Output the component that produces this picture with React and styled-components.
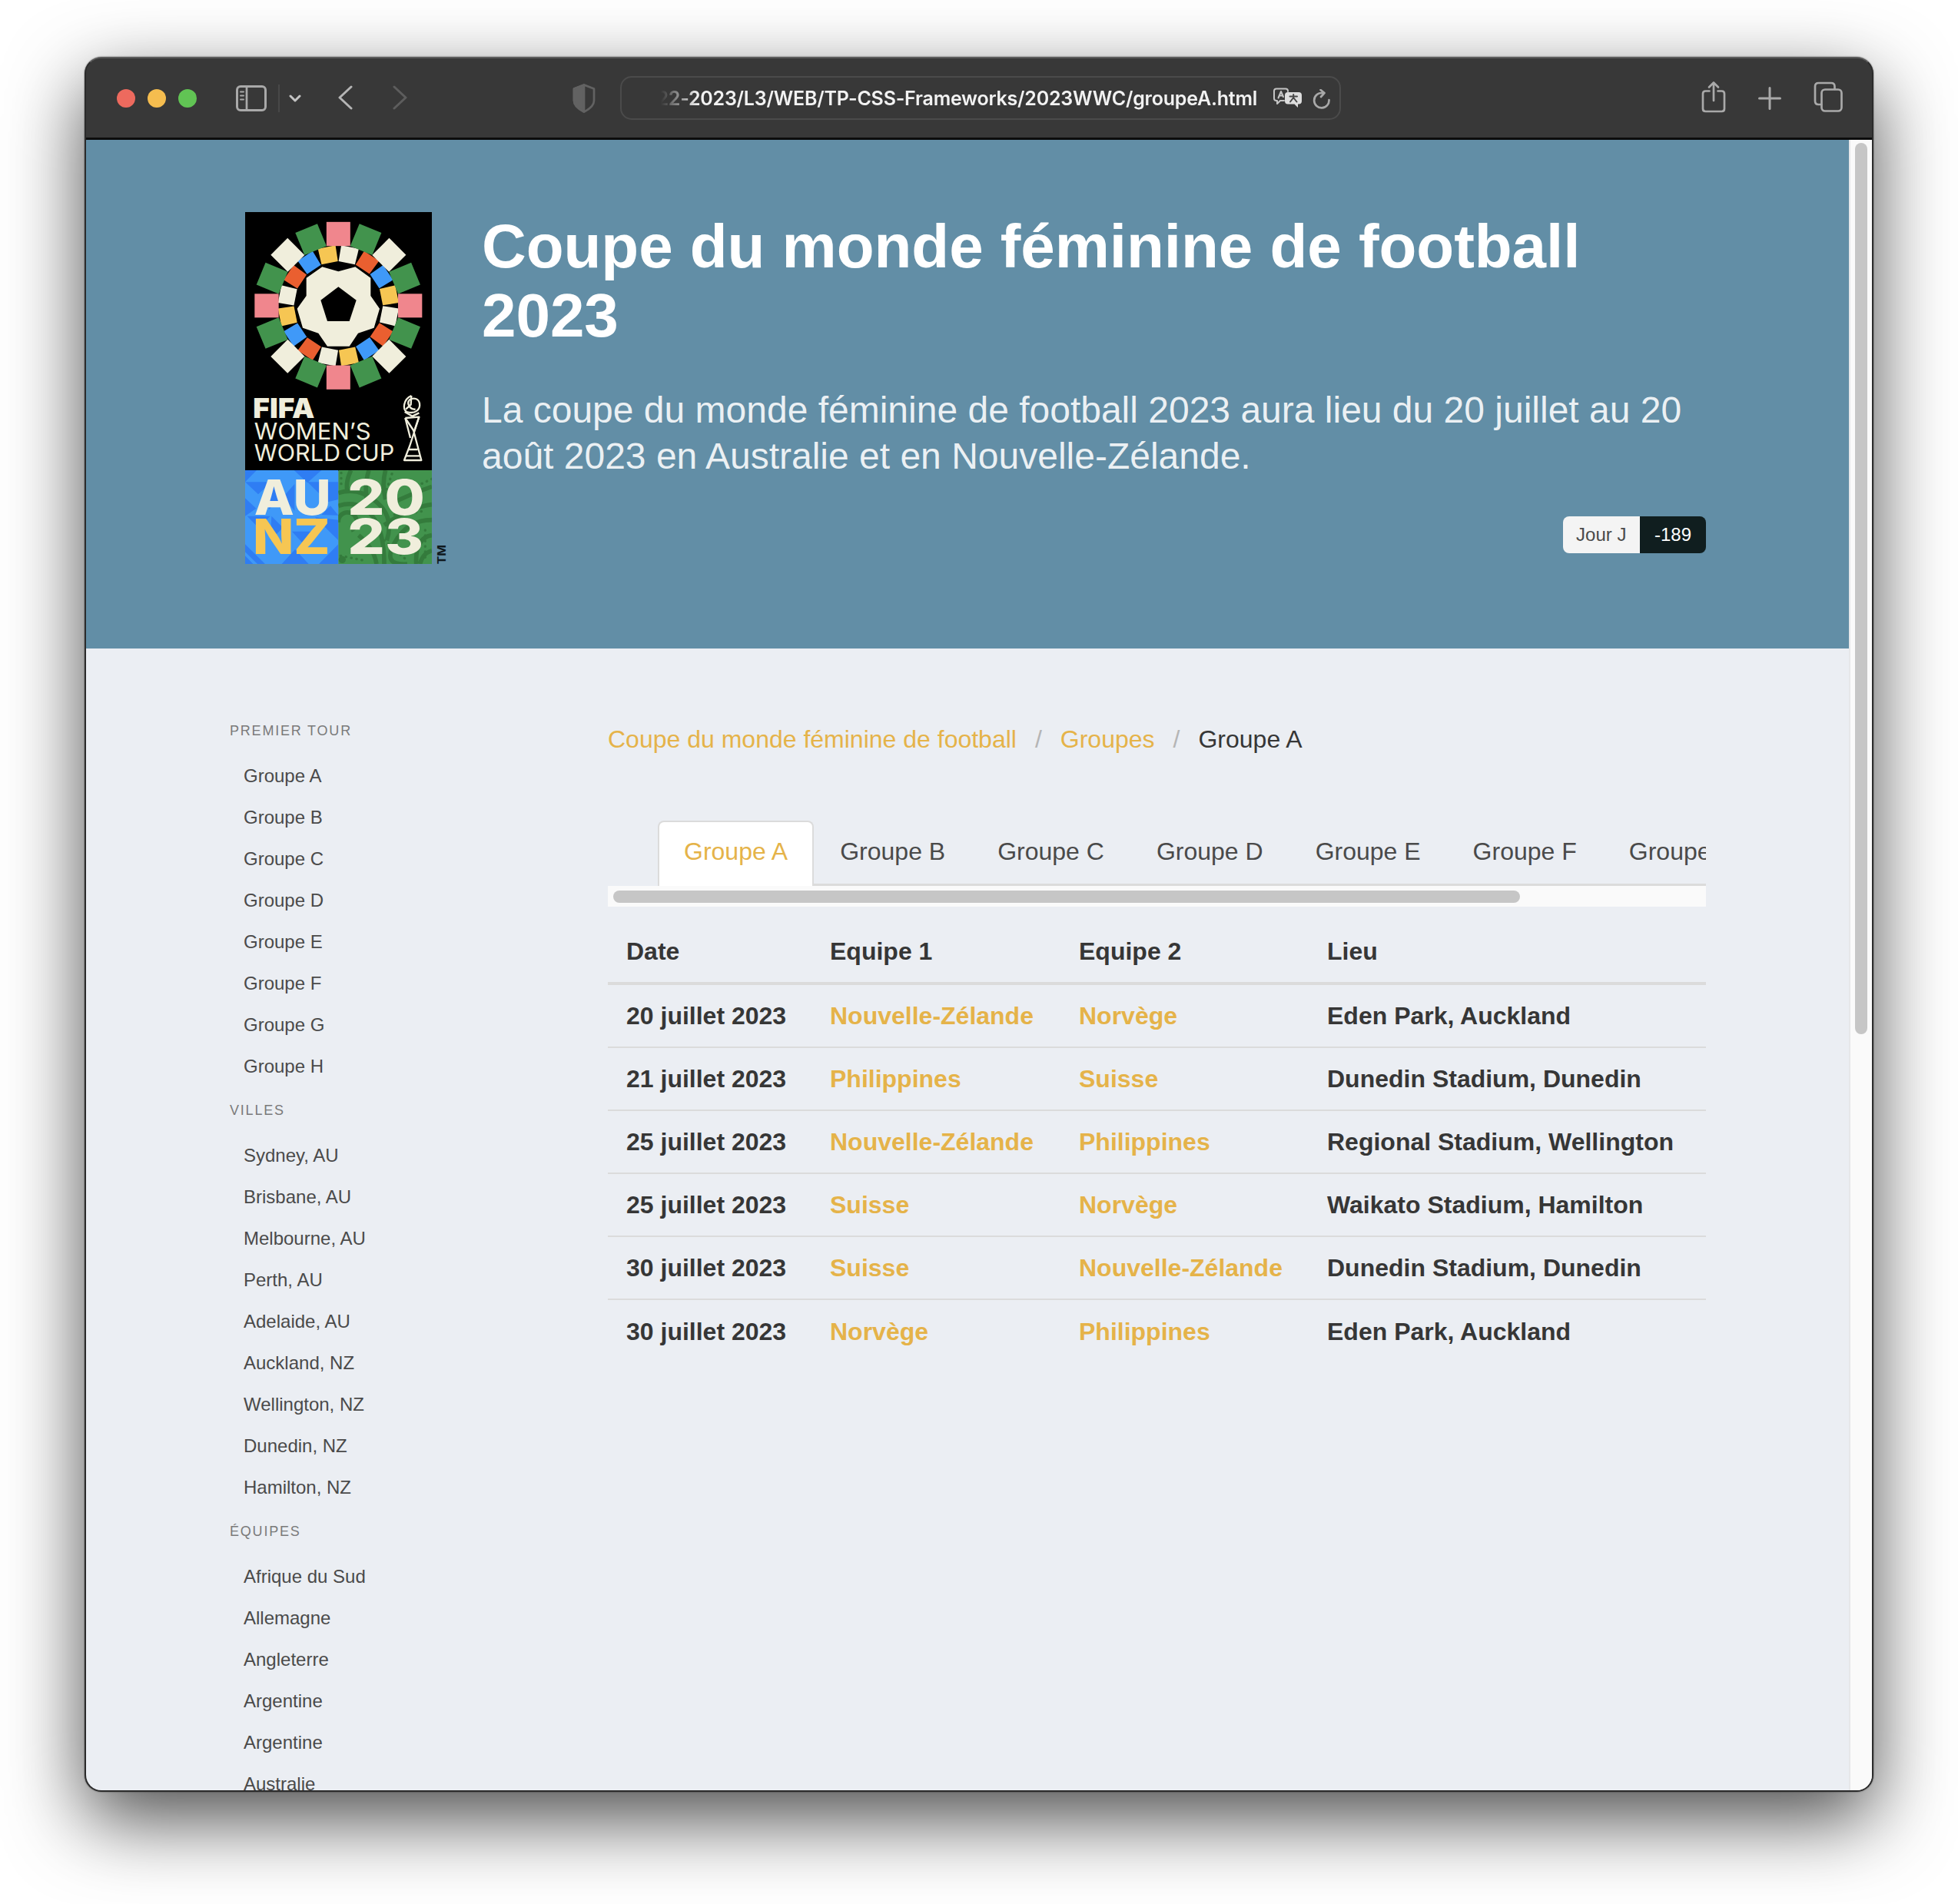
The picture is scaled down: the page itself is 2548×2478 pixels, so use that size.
import React from 'react';
import styled, { createGlobalStyle } from 'styled-components';

const GlobalStyle = createGlobalStyle`
  *, *::before, *::after { box-sizing: border-box; }
  html, body { margin: 0; padding: 0; background: #fff; }
  body { font-family: "Liberation Sans", Arial, sans-serif; color: #4a4a4a; overflow: hidden; }
  ul, h1, h2, p { margin: 0; padding: 0; list-style: none; font-weight: inherit; }
  a { color: inherit; text-decoration: none; }
`;

const Desktop = styled.div`
  width: 2548px;
  height: 2478px;
  padding: 74px 110px 0;
  overflow: hidden;
`;

const Window = styled.div`
  display: flex;
  flex-direction: column;
  width: 2328px;
  height: 2258px;
  border: 2px solid #2b2b2b;
  border-top-color: #5a5a5a;
  border-radius: 22px;
  background: #383838;
  overflow: hidden;
  box-shadow: 0 0 2px rgba(0, 0, 0, 0.6), 0 36px 100px rgba(0, 0, 0, 0.7);
`;

const Toolbar = styled.div`
  display: flex;
  align-items: center;
  flex: none;
  height: 106px;
  padding: 0 38px 0 40px;
  background: #383838;
  border-bottom: 3px solid #0c0c0c;
`;

const Lights = styled.div`
  display: flex;
  gap: 16px;
`;

const Light = styled.span`
  width: 24px;
  height: 24px;
  border-radius: 50%;
  background: ${(p) => p.$color};
`;

const Glyph = styled.svg`
  display: block;
  flex: none;
  width: ${(p) => p.$w}px;
  height: ${(p) => p.$h}px;
  margin-left: ${(p) => p.$gap || 0}px;
  margin-top: ${(p) => p.$drop || 0}px;
  fill: none;
  stroke: ${(p) => p.$color || '#a9a9a9'};
  stroke-width: 2.7;
  stroke-linecap: round;
  stroke-linejoin: round;
`;

const Divider = styled.span`
  width: 2px;
  height: 36px;
  margin-left: 15px;
  background: #484848;
`;

const AddressBar = styled.div`
  display: flex;
  align-items: center;
  width: 938px;
  height: 57px;
  margin-left: 32px;
  padding: 0 10px 0 51px;
  border: 2px solid #4b4b4b;
  border-radius: 15px;
`;

const Url = styled.div`
  display: flex;
  justify-content: flex-end;
  width: 776px;
  overflow: hidden;
  white-space: nowrap;
  font: 600 25px/40px Inter, sans-serif;
  color: #f2f2f2;
  letter-spacing: -0.22px;
  mask-image: linear-gradient(to right, transparent 0, #000 48px);
`;

const Spacer = styled.span`
  flex: 1;
`;

const Viewport = styled.div`
  display: flex;
  flex: 1;
  min-height: 0;
  background: #ebeef3;
`;

const Page = styled.div`
  flex: 1;
  min-width: 0;
  overflow: hidden;
`;

const VerticalTrack = styled.div`
  flex: none;
  width: 30px;
  padding: 4px 6px;
  background: #fafafa;
  border-left: 2px solid #e6e7e9;
`;

const Thumb = styled.div`
  width: ${(p) => p.$w}px;
  height: ${(p) => p.$h}px;
  border-radius: 8px;
  background: #c6c6c6;
`;

const Hero = styled.header`
  display: flex;
  height: 662px;
  padding: 94px 186px 0 207px;
  background: #628ea6;
`;

const HeroText = styled.div`
  display: flex;
  flex-direction: column;
  flex: 1;
  margin-left: 46px;
`;

const Title = styled.h1`
  font-size: 80px;
  line-height: 90px;
  font-weight: 700;
  letter-spacing: -0.05px;
  color: #fff;
`;

const Subtitle = styled.h2`
  margin-top: 48px;
  font-size: 48px;
  line-height: 60px;
  color: rgba(255, 255, 255, 0.88);
`;

const Tags = styled.div`
  display: flex;
  align-self: flex-end;
  margin-top: 48px;
  border-radius: 8px;
  overflow: hidden;
`;

const Tag = styled.span`
  height: 48px;
  padding: 0 ${(p) => (p.$dark ? 19 : 17.5)}px;
  font-size: 24px;
  line-height: 47px;
  color: ${(p) => (p.$dark ? '#fff' : '#4a4a4a')};
  background: ${(p) => (p.$dark ? '#101e1f' : '#f4f4f4')};
`;

const Columns = styled.div`
  display: flex;
  padding: 94px 186px 0 187px;
`;

const Menu = styled.aside`
  flex: none;
  width: 492px;
`;

const MenuLabel = styled.p`
  margin: 0 0 17.5px;
  font-size: 18px;
  line-height: 27px;
  letter-spacing: 1.8px;
  text-transform: uppercase;
  color: #7a7a7a;
`;

const MenuList = styled.ul`
  margin-bottom: 17.5px;
`;

const MenuItem = styled.li`
  padding: 12px 18px;
  font-size: 24px;
  line-height: 30px;
  color: #4a4a4a;
`;

const Main = styled.main`
  flex: 1;
  min-width: 0;
  font-size: 32px;
`;

const Breadcrumb = styled.ul`
  display: flex;
  align-items: center;
  height: 48px;
`;

const Crumb = styled.li`
  color: ${(p) => (p.$active ? '#363636' : '#e5b349')};

  &:not(:first-child)::before {
    content: "/";
    padding: 0 24px;
    color: #b5b5b5;
  }
`;

const TabScroller = styled.div`
  margin-top: 82px;
  overflow: hidden;
`;

const TabList = styled.ul`
  display: flex;
  width: max-content;
  margin-left: 65px;
  height: 85px;
  border-bottom: 3px solid #dbdbdb;
`;

const Tab = styled.li`
  height: 85px;
  padding: 0 32px;
  border: 2px solid ${(p) => (p.$active ? '#dbdbdb' : 'transparent')};
  border-bottom: 0;
  border-radius: 8px 8px 0 0;
  line-height: 77px;
  white-space: nowrap;
  color: ${(p) => (p.$active ? '#e5b349' : '#4a4a4a')};
  background: ${(p) => (p.$active ? '#fff' : 'transparent')};
`;

const HorizontalTrack = styled.div`
  height: 27px;
  padding: 6px 7px;
  background: #fafafa;
`;

const TableWrap = styled.div`
  margin-top: 18px;
  overflow: hidden;
`;

const Table = styled.table`
  width: 1481px;
  table-layout: fixed;
  border-collapse: separate;
  border-spacing: 0;
`;

const Cell = styled.td`
  width: ${(p) => p.$w}px;
  height: ${(p) => (p.$head ? 84 : 82)}px;
  padding: 0 24px 1px;
  border-bottom: ${(p) => (p.$head ? '4px' : p.$last ? '0' : '2px')} solid #dbdbdb;
  font-weight: 700;
  line-height: 48px;
  text-align: left;
  vertical-align: middle;
  white-space: nowrap;
  color: ${(p) => (p.$link ? '#e5b349' : '#363636')};
`;

const LogoSvg = styled.svg`
  flex: none;
  display: block;
  width: 262px;
  height: 458px;
`;

const CREAM = '#f0eedc';
const OUTER = ['#f0868d', '#42934d', CREAM, '#42934d'];
const INNER = [CREAM, '#ea5f30', '#3f99f8', '#f6c653'];
const steps = Array.from({ length: 16 }, (_, i) => i);

const Logo = () => (
  <LogoSvg viewBox="57 48 786 1374">
    <defs>
      <clipPath id="blue"><rect x="57" y="1056" width="364" height="366" /></clipPath>
      <clipPath id="green"><rect x="421" y="1056" width="365" height="366" /></clipPath>
    </defs>
    <rect x="57" y="48" width="729" height="1010" fill="#000" />
    {steps.map((i) => (
      <path key={i} d="M386 180 L456 180 L453 243 L388 243 Z" fill={INNER[i % 4]} transform={`rotate(${11.25 + i * 22.5} 421 413.5)`} />
    ))}
    {steps.map((i) => (
      <rect key={i} x="374.5" y="86.5" width="93" height="94" fill={OUTER[i % 4]} transform={`rotate(${i * 22.5} 421 413.5)`} />
    ))}
    <path fill={CREAM} d="M421 280L487 262L547 305V375L582 425L560 500L498 521L464 572H378L343 521L282 500L260 425L296 375V305L358 262Z" />
    <path fill="#000" d="M421 340L491 392L464 474H378L352 392Z" />
    <g fill={CREAM} fontFamily="Inter, sans-serif">
      <text x="88" y="852" fontSize="107" fontWeight="900" textLength="240" lengthAdjust="spacingAndGlyphs">FIFA</text>
      <text x="92" y="935" fontSize="89" fontWeight="400" textLength="456" lengthAdjust="spacingAndGlyphs">WOMEN’S</text>
      <text x="92" y="1019" fontSize="89" fontWeight="400" textLength="548" lengthAdjust="spacingAndGlyphs" wordSpacing="-8">WORLD CUP</text>
    </g>
    <g fill="none" stroke={CREAM} strokeWidth="7" strokeLinejoin="round">
      <path d="M682 852L736 848L700 960L678 1017H745L714 900L682 852M695 975H730M684 1000H740" />
      <path d="M682 852L702 930M736 848L718 900" />
      <path d="M706 765C675 778 670 820 688 828C720 838 742 820 738 795C734 775 715 772 700 780C685 795 700 820 722 818" />
      <path d="M706 765L704 800L684 818M680 828L710 845L736 832" />
    </g>
    <g clipPath="url(#blue)">
      <rect x="57" y="1056" width="364" height="366" fill="#3f99f8" />
      <g fill="#2f7df3">
        <path d="M57 1056H102L57 1102ZM248 1056H355L300 1105ZM57 1102H160L108 1150ZM300 1102H421V1170L380 1180ZM57 1165L100 1205L57 1235ZM150 1102L205 1155L150 1210ZM205 1160L250 1110V1215ZM355 1230L390 1195L421 1232ZM65 1235H155L110 1282ZM160 1235L205 1280L155 1330ZM240 1295H340L290 1350ZM330 1240L421 1330V1250ZM200 1422L252 1365L305 1422ZM345 1422L421 1345V1422ZM57 1345L135 1422H105L57 1375ZM57 1390L88 1422H57Z" />
      </g>
    </g>
    <g clipPath="url(#green)">
      <rect x="421" y="1056" width="365" height="366" fill="#42934d" />
      <g fill="none" stroke="#347b3c" strokeWidth="17">
        <path d="M470 1056Q450 1100 455 1130M540 1056Q520 1120 535 1190M605 1056Q590 1110 605 1170M421 1145Q500 1120 570 1180T610 1330M421 1195Q500 1170 550 1230T600 1422M421 1260A36 36 0 1 1 470 1290M786 1120Q700 1150 620 1190M786 1190Q700 1200 600 1270M786 1250Q690 1250 640 1340T690 1422M786 1310Q720 1320 725 1422M500 1310Q560 1360 570 1422M740 1422Q750 1380 786 1370" />
        <g strokeWidth="10" strokeLinecap="round" strokeDasharray="1 20">
          <path d="M432 1066V1120M630 1070L600 1160M786 1090L700 1130M640 1230L760 1215M430 1390L530 1410M600 1330L680 1400M760 1290V1400" />
        </g>
      </g>
      <circle cx="436" cy="1405" r="14" fill="#347b3c" />
    </g>
    <g fontFamily="Inter, sans-serif" fontWeight="800" fontSize="188" fill={CREAM}>
      <text x="92" y="1231" textLength="300" lengthAdjust="spacingAndGlyphs">AU</text>
      <text x="87" y="1382" textLength="302" lengthAdjust="spacingAndGlyphs" fill="#f6c653">NZ</text>
      <text x="457" y="1231" textLength="302" lengthAdjust="spacingAndGlyphs">20</text>
      <text x="457" y="1382" textLength="296" lengthAdjust="spacingAndGlyphs">23</text>
    </g>
    <text transform="translate(839 1423) rotate(-90)" fontFamily="Inter, sans-serif" fontWeight="700" fontSize="43" textLength="76" lengthAdjust="spacingAndGlyphs" fill="#10191d">TM</text>
  </LogoSvg>
);

const SidebarIcon = () => (
  <Glyph $w={40} $h={34} $gap={51} viewBox="0 0 40 34">
    <rect x="1.5" y="1.5" width="37" height="31" rx="4.5" strokeWidth="3" />
    <path d="M14 2V32" />
    <path d="M6 8.5H10M6 13.5H10M6 18.5H10" strokeWidth="2" />
  </Glyph>
);

const ShieldIcon = () => (
  <Glyph $w={30} $h={38} $gap={214} $color="#626262" viewBox="0 0 30 38">
    <path d="M15 1.5L28 6.5V22C28 29 22 33 15 36.5C8 33 2 29 2 22V6.5Z" />
    <path d="M15 1.5V36.5C8 33 2 29 2 22V6.5Z" fill="#626262" />
  </Glyph>
);

const TranslateIcon = () => (
  <Glyph $w={40} $h={28} $gap={20} $color="#c4c4c4" viewBox="0 0 40 28">
    <path d="M20 5V4.500Q20 1.500 17 1.500H5Q2 1.500 2 4.500V14Q2 17 5 17H6V21L10 17H15" strokeWidth="2" />
    <path d="M7.500 13.500L11 5L14 12M8.700 10.500H13" strokeWidth="2" />
    <path d="M20 6H34Q38 6 38 10V17.500Q38 21.500 34 21.500H33V26L28.500 21.500H20Q16 21.500 16 17.500V10Q16 6 20 6Z" fill="#dedede" stroke="none" />
    <path d="M22.500 11.500H32M27.200 9V11.500M27.200 13L23 18.500M27.200 13L31.500 18.500" stroke="#484848" strokeWidth="2" />
  </Glyph>
);

const ReloadIcon = () => (
  <Glyph $w={24} $h={26} $gap={12} $drop={2} viewBox="0 0 24 26">
    <path d="M21.500 14A9.700 9.700 0 1 1 12 5H15.500M10.500 1L15.500 5L11 10" />
  </Glyph>
);

const ShareIcon = () => (
  <Glyph $w={32} $h={42} $drop={-4} viewBox="0 0 32 42">
    <path d="M10.500 13.500H5.500Q2 13.500 2 17V36.500Q2 40 5.500 40H26.500Q30 40 30 36.500V17Q30 13.500 26.500 13.500H21.500M16 26V2.500M10 8.500L16 2.500L22 8.500" />
  </Glyph>
);

const TabsIcon = () => (
  <Glyph $w={38} $h={40} $gap={42} $drop={-4} viewBox="0 0 38 40">
    <rect x="10.500" y="10.500" width="26" height="28" rx="4.500" />
    <path d="M10 30H6.500Q2 30 2 25.500V6.500Q2 2 6.500 2H23Q27.500 2 27.500 6.500V10" />
  </Glyph>
);

const letters = ['A', 'B', 'C', 'D', 'E', 'F', 'G', 'H'];

const menu = [
  ['Premier tour', letters.map((l) => `Groupe ${l}`)],
  ['Villes', ['Sydney, AU', 'Brisbane, AU', 'Melbourne, AU', 'Perth, AU', 'Adelaide, AU', 'Auckland, NZ', 'Wellington, NZ', 'Dunedin, NZ', 'Hamilton, NZ']],
  ['Équipes', ['Afrique du Sud', 'Allemagne', 'Angleterre', 'Argentine', 'Argentine', 'Australie']],
];

const matches = [
  ['20 juillet 2023', 'Nouvelle-Zélande', 'Norvège', 'Eden Park, Auckland'],
  ['21 juillet 2023', 'Philippines', 'Suisse', 'Dunedin Stadium, Dunedin'],
  ['25 juillet 2023', 'Nouvelle-Zélande', 'Philippines', 'Regional Stadium, Wellington'],
  ['25 juillet 2023', 'Suisse', 'Norvège', 'Waikato Stadium, Hamilton'],
  ['30 juillet 2023', 'Suisse', 'Nouvelle-Zélande', 'Dunedin Stadium, Dunedin'],
  ['30 juillet 2023', 'Norvège', 'Philippines', 'Eden Park, Auckland'],
];

const widths = [265, 324, 323, 569];

export default function App() {
  return (
    <Desktop>
      <GlobalStyle />
      <Window>
        <Toolbar>
          <Lights>
            <Light $color="#ed6a5e" />
            <Light $color="#f5bd4f" />
            <Light $color="#61c454" />
          </Lights>
          <SidebarIcon />
          <Divider />
          <Glyph $w={16} $h={10} $gap={12} $color="#c4c4c4" viewBox="0 0 16 10">
            <path d="M2 2L8 8L14 2" strokeWidth="3" />
          </Glyph>
          <Glyph $w={20} $h={32} $gap={47} $drop={-2} $color="#b5b5b5" viewBox="0 0 20 32">
            <path d="M18 2L3 16L18 30" strokeWidth="3" />
          </Glyph>
          <Glyph $w={20} $h={32} $gap={52} $drop={-2} $color="#5d5d5d" viewBox="0 0 20 32">
            <path d="M2 2L17 16L2 30" strokeWidth="3" />
          </Glyph>
          <ShieldIcon />
          <AddressBar>
            <Url>22-2023/L3/WEB/TP-CSS-Frameworks/2023WWC/groupeA.html</Url>
            <TranslateIcon />
            <ReloadIcon />
          </AddressBar>
          <Spacer />
          <ShareIcon />
          <Glyph $w={30} $h={32} $gap={42} viewBox="0 0 30 32">
            <path d="M15 2.500V29.500M1.500 16H28.500" strokeWidth="3" />
          </Glyph>
          <TabsIcon />
        </Toolbar>
        <Viewport>
          <Page>
            <Hero>
              <Logo />
              <HeroText>
                <Title>Coupe du monde féminine de football 2023</Title>
                <Subtitle>
                  La coupe du monde féminine de football 2023 aura lieu du 20 juillet au 20 août 2023 en Australie et en Nouvelle-Zélande.
                </Subtitle>
                <Tags>
                  <Tag>Jour J</Tag>
                  <Tag $dark>-189</Tag>
                </Tags>
              </HeroText>
            </Hero>
            <Columns>
              <Menu>
                {menu.map(([label, items]) => (
                  <React.Fragment key={label}>
                    <MenuLabel>{label}</MenuLabel>
                    <MenuList>
                      {items.map((item, i) => (
                        <MenuItem key={i}>{item}</MenuItem>
                      ))}
                    </MenuList>
                  </React.Fragment>
                ))}
              </Menu>
              <Main>
                <Breadcrumb>
                  <Crumb>Coupe du monde féminine de football</Crumb>
                  <Crumb>Groupes</Crumb>
                  <Crumb $active>Groupe A</Crumb>
                </Breadcrumb>
                <TabScroller>
                  <TabList>
                    {letters.map((l) => (
                      <Tab key={l} $active={l === 'A'}>Groupe {l}</Tab>
                    ))}
                  </TabList>
                </TabScroller>
                <HorizontalTrack>
                  <Thumb $w={1180} $h={16} />
                </HorizontalTrack>
                <TableWrap>
                  <Table>
                    <thead>
                      <tr>
                        {['Date', 'Equipe 1', 'Equipe 2', 'Lieu'].map((h, i) => (
                          <Cell as="th" key={h} $head $w={widths[i]}>{h}</Cell>
                        ))}
                      </tr>
                    </thead>
                    <tbody>
                      {matches.map((row, r) => (
                        <tr key={r}>
                          {row.map((value, c) => (
                            <Cell key={c} $link={c === 1 || c === 2} $last={r === matches.length - 1}>{value}</Cell>
                          ))}
                        </tr>
                      ))}
                    </tbody>
                  </Table>
                </TableWrap>
              </Main>
            </Columns>
          </Page>
          <VerticalTrack>
            <Thumb $w={16} $h={1160} />
          </VerticalTrack>
        </Viewport>
      </Window>
    </Desktop>
  );
}
